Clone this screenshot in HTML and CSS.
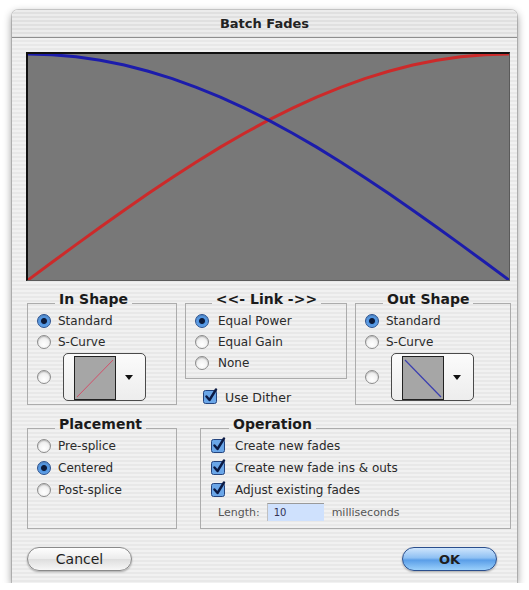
FILE: index.html
```html
<!DOCTYPE html>
<html lang="en">
<head>
    <meta charset="UTF-8">
    <title>Batch Fades</title>
    <link rel="stylesheet" href="styles.css">
</head>
<body>

<div class="window">
    <div class="titlebar">Batch Fades</div>

    <div class="dialog">
        <!-- Fade curve preview -->
        <div class="graph">
            <svg viewBox="0 0 100 100" preserveAspectRatio="none">
                <polyline class="fade-in" vector-effect="non-scaling-stroke" points="0,100 5,92.15 10,84.36 15,76.66 20,69.1 25,61.73 30,54.6 35,47.75 40,41.22 45,35.06 50,29.29 55,23.96 60,19.1 65,14.74 70,10.9 75,7.61 80,4.89 85,2.76 90,1.23 95,0.31 100,0"/>
                <polyline class="fade-out" vector-effect="non-scaling-stroke" points="0,0 5,0.31 10,1.23 15,2.76 20,4.89 25,7.61 30,10.9 35,14.74 40,19.1 45,23.96 50,29.29 55,35.06 60,41.22 65,47.75 70,54.6 75,61.73 80,69.1 85,76.66 90,84.36 95,92.15 100,100"/>
            </svg>
        </div>

        <div class="top-row">
            <fieldset class="group">
                <legend>In Shape</legend>
                <div class="opt"><span class="radio on"></span>Standard</div>
                <div class="opt"><span class="radio"></span>S-Curve</div>
                <div class="opt custom">
                    <span class="radio"></span>
                    <div class="popup">
                        <svg class="swatch" width="42" height="44" viewBox="0 0 42 44">
                            <rect x="0.5" y="0.5" width="41" height="43" fill="#a6a6a6" stroke="#222"/>
                            <line x1="3" y1="41" x2="39" y2="4" stroke="#d2506a" stroke-width="1"/>
                        </svg>
                        <span class="arrow"></span>
                    </div>
                </div>
            </fieldset>

            <div class="link-col">
                <fieldset class="group link">
                    <legend>&lt;&lt;- Link -&gt;&gt;</legend>
                    <div class="opt"><span class="radio on"></span>Equal Power</div>
                    <div class="opt"><span class="radio"></span>Equal Gain</div>
                    <div class="opt"><span class="radio"></span>None</div>
                </fieldset>
                <div class="opt dither">
                    <svg class="check" width="16" height="16" viewBox="0 0 16 16"><rect x="0.5" y="2.5" width="13" height="13" rx="2"/><path d="M3.5 8.5 L6.5 12 L13 1.5"/></svg>
                    Use Dither
                </div>
            </div>

            <fieldset class="group">
                <legend>Out Shape</legend>
                <div class="opt"><span class="radio on"></span>Standard</div>
                <div class="opt"><span class="radio"></span>S-Curve</div>
                <div class="opt custom">
                    <span class="radio"></span>
                    <div class="popup">
                        <svg class="swatch" width="42" height="44" viewBox="0 0 42 44">
                            <rect x="0.5" y="0.5" width="41" height="43" fill="#a6a6a6" stroke="#222"/>
                            <line x1="3" y1="4" x2="39" y2="41" stroke="#3b3fb0" stroke-width="1.2"/>
                        </svg>
                        <span class="arrow"></span>
                    </div>
                </div>
            </fieldset>
        </div>

        <div class="bottom-row">
            <fieldset class="group">
                <legend>Placement</legend>
                <div class="opt"><span class="radio"></span>Pre-splice</div>
                <div class="opt"><span class="radio on"></span>Centered</div>
                <div class="opt"><span class="radio"></span>Post-splice</div>
            </fieldset>

            <fieldset class="group operation">
                <legend>Operation</legend>
                <div class="opt">
                    <svg class="check" width="16" height="16" viewBox="0 0 16 16"><rect x="0.5" y="2.5" width="13" height="13" rx="2"/><path d="M3.5 8.5 L6.5 12 L13 1.5"/></svg>
                    Create new fades
                </div>
                <div class="opt">
                    <svg class="check" width="16" height="16" viewBox="0 0 16 16"><rect x="0.5" y="2.5" width="13" height="13" rx="2"/><path d="M3.5 8.5 L6.5 12 L13 1.5"/></svg>
                    Create new fade ins &amp; outs
                </div>
                <div class="opt">
                    <svg class="check" width="16" height="16" viewBox="0 0 16 16"><rect x="0.5" y="2.5" width="13" height="13" rx="2"/><path d="M3.5 8.5 L6.5 12 L13 1.5"/></svg>
                    Adjust existing fades
                </div>
                <div class="length-row">
                    <span>Length:</span>
                    <span class="field">10</span>
                    <span>milliseconds</span>
                </div>
            </fieldset>
        </div>

        <div class="buttons">
            <button class="btn">Cancel</button>
            <button class="btn default">OK</button>
        </div>
    </div>
</div>

</body>
</html>
```

FILE: styles.css
```css
body {
    margin: 0;
    background: #fff;
    font-family: "DejaVu Sans", "Liberation Sans", sans-serif;
    font-size: 12px;
    color: #2a2a2a;
}

.window {
    margin: 10px 0 0 12px;
    width: 505px;
    height: 573px;
    box-sizing: border-box;
    border-radius: 6px 6px 0 0;
    background: repeating-linear-gradient(to bottom, #f1f1f1 0, #f1f1f1 2px, #e8e8e8 2px, #e8e8e8 4px);
    box-shadow: 0 3px 8px rgba(0, 0, 0, 0.45), 0 0 0 1px rgba(0, 0, 0, 0.15);
    overflow: hidden;
}

.titlebar {
    height: 28px;
    box-sizing: border-box;
    border-bottom: 1px solid #8e8e8e;
    background: repeating-linear-gradient(to bottom, #ececec 0, #ececec 2px, #e0e0e0 2px, #e0e0e0 4px);
    text-align: center;
    line-height: 27px;
    font-weight: bold;
    font-size: 13px;
    color: #222;
}

.dialog {
    padding: 14px 7px 0 14px;
}

/* curve preview */
.graph {
    width: 484px;
    height: 229px;
    box-sizing: border-box;
    background: #787878;
    border-top: 2px solid #111;
    border-left: 2px solid #111;
    border-right: 1px solid #5a5a5a;
    border-bottom: 1px solid #5a5a5a;
}
.graph svg {
    display: block;
    width: 100%;
    height: 100%;
}
.graph polyline {
    fill: none;
    stroke-width: 3;
}
.fade-in {
    stroke: #cc2a2a;
}
.fade-out {
    stroke: #1c1cab;
}

/* group boxes */
.group {
    margin: 0;
    padding: 0 8px 3px 9px;
    border: 1px solid #acacac;
    min-inline-size: 0;
    display: flex;
    flex-direction: column;
    gap: 7px;
}
.group legend {
    margin-left: 18px;
    padding: 0 4px 8px 4px;
    font-size: 14px;
    line-height: 14px;
    font-weight: bold;
    color: #1a1a1a;
}
.group.link legend {
    margin: 0 auto;
}

.top-row {
    display: grid;
    grid-template-columns: 150px 162px 156px;
    column-gap: 8px;
    align-items: start;
    margin: 11px 0 0 1px;
}
.bottom-row {
    display: grid;
    grid-template-columns: 150px 311px;
    column-gap: 23px;
    margin: 12px 0 0 1px;
}
.bottom-row .group {
    gap: 8px;
}

.opt {
    display: flex;
    align-items: center;
    gap: 7px;
    height: 14px;
    white-space: nowrap;
}
.link .opt {
    gap: 9px;
}
.group.link {
    padding-bottom: 8px;
}

.opt.custom {
    height: 48px;
    margin-top: -3px;
    gap: 12px;
}

.radio {
    width: 14px;
    height: 14px;
    box-sizing: border-box;
    border-radius: 50%;
    border: 1px solid #8c8c8c;
    background: radial-gradient(circle at 50% 70%, #ffffff 0, #f2f2f2 50%, #d6d6d6 100%);
    box-shadow: inset 0 1px 1px rgba(0, 0, 0, 0.2);
    flex: none;
}
.radio.on {
    border-color: #284f8e;
    background: radial-gradient(circle at 50% 50%, #0d1b3a 0, #0d1b3a 2.5px, #4f93e0 3.5px, #7db6f2 100%);
}

/* pop-up shape menu */
.popup {
    width: 83px;
    height: 48px;
    box-sizing: border-box;
    border: 1px solid #4a4a4a;
    border-radius: 5px;
    background: linear-gradient(#fbfbfb, #ededed);
    display: flex;
    align-items: center;
    padding: 0 0 0 10px;
    gap: 9px;
}
.swatch {
    display: block;
    margin-top: 2px;
}
.arrow {
    width: 0;
    height: 0;
    border-left: 4px solid transparent;
    border-right: 4px solid transparent;
    border-top: 5px solid #111;
}

/* checkboxes */
.check {
    flex: none;
    margin-top: -3px;
}
.check rect {
    fill: #6aa6e8;
    stroke: #24447e;
}
.check path {
    fill: none;
    stroke: #0b1a44;
    stroke-width: 2.4;
    stroke-linecap: round;
    stroke-linejoin: round;
}
.dither {
    margin: 11px 0 0 18px;
    gap: 6px;
    font-size: 12.5px;
}

.operation {
    padding-left: 10px;
}
.operation .opt {
    gap: 8px;
}
.length-row {
    display: flex;
    align-items: center;
    height: 18px;
    margin: -2px 0 4px 7px;
    font-size: 11px;
    color: #555;
}
.field {
    width: 57px;
    height: 18px;
    box-sizing: border-box;
    margin: 0 8px 0 7px;
    padding-left: 6px;
    line-height: 17px;
    background: #cfe1fd;
    border-top: 1px solid #9a9a9a;
    border-left: 1px solid #c0c0c0;
    color: #335;
    font-size: 10px;
}

/* buttons */
.buttons {
    display: flex;
    justify-content: space-between;
    margin: 18px 13px 0 1px;
}
.btn {
    height: 24px;
    width: 105px;
    border-radius: 12px;
    border: 1px solid #8a8a8a;
    background: linear-gradient(#fefefe 0%, #ececec 48%, #dedede 52%, #f7f7f7 100%);
    box-shadow: 0 1px 2px rgba(0, 0, 0, 0.3);
    font-family: "DejaVu Sans", "Liberation Sans", sans-serif;
    font-size: 14px;
    color: #1e1e1e;
    padding: 0;
}
.btn.default {
    width: 95px;
    border-color: #2b4f8d;
    background: linear-gradient(#cfe5fc 0%, #8ec0f3 45%, #5a9ee8 55%, #9ad0fb 100%);
    font-weight: bold;
    font-size: 13px;
}
```
